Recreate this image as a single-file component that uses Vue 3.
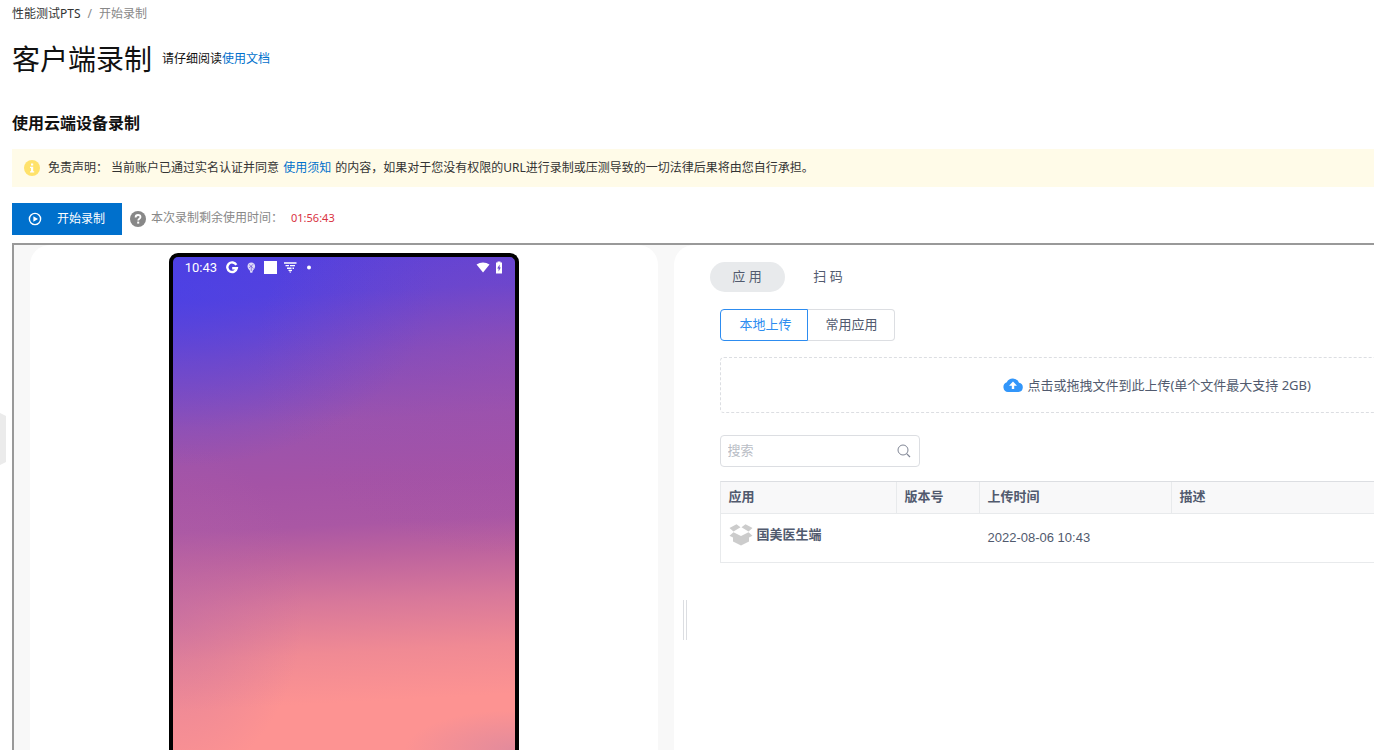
<script setup>
import { ref } from 'vue'

const keyword = ref('')
const columns = [
  { key: 'app', label: '应用' },
  { key: 'version', label: '版本号' },
  { key: 'time', label: '上传时间' },
  { key: 'desc', label: '描述' }
]
const rows = [{ name: '国美医生端', version: '', time: '2022-08-06 10:43', desc: '' }]
</script>

<template>
  <div class="page">
    <button class="side-handle" type="button" aria-label="展开侧栏"></button>

    <nav class="breadcrumb">
      <a href="#">性能测试PTS</a>
      <span class="sep">/</span>
      <span class="current">开始录制</span>
    </nav>

    <header class="heading">
      <h1>客户端录制</h1>
      <p>请仔细阅读<a href="#">使用文档</a></p>
    </header>

    <h2>使用云端设备录制</h2>

    <div class="notice">
      <svg class="info" viewBox="0 0 16 16" aria-hidden="true">
        <circle cx="8" cy="8" r="8" fill="#ffe26b" />
        <path d="M7 3.500h2.200v2H7zM6 6.800h3.200v4.400h1v1.300H6v-1.300h1V8H6z" fill="#fff" />
      </svg>
      <span class="notice-label">免责声明：</span>
      <span>当前账户已通过实名认证并同意 <a href="#">使用须知</a> 的内容，如果对于您没有权限的URL进行录制或压测导致的一切法律后果将由您自行承担。</span>
    </div>

    <div class="toolbar">
      <button class="start" type="button">
        <svg viewBox="0 0 14 14" aria-hidden="true">
          <circle cx="7" cy="7" r="5.6" fill="none" stroke="#fff" stroke-width="1.4" />
          <path d="M5.4 4.2 10 7 5.4 9.8z" fill="#fff" />
        </svg>
        开始录制
      </button>
      <svg class="help" viewBox="0 0 16 16" aria-hidden="true">
        <circle cx="8" cy="8" r="8" fill="#888" />
        <path d="M5.6 6.4C5.6 4.8 6.6 4 8 4s2.5.8 2.5 2.1c0 1.6-2.3 1.7-2.3 3.3" fill="none" stroke="#fff" stroke-width="1.8" />
        <rect x="7.2" y="10.6" width="2" height="2" fill="#fff" />
      </svg>
      <span class="remain">本次录制剩余使用时间：</span>
      <span class="countdown">01:56:43</span>
    </div>

    <main class="frame">
      <div class="workspace">
        <section class="panel device-panel">
          <div class="phone">
            <div class="status">
              <span class="clock">10:43</span>
              <svg class="glyphs" viewBox="0 0 88 14" aria-hidden="true">
                <path d="M11.3 3.9A4.8 4.8 0 1 0 11.8 7.2H7.2" fill="none" stroke="#fff" stroke-width="2.4" />
                <path d="M26.3 1.5c2.3 0 3.8 1.6 3.8 3.8 0 2-1.2 3.2-2.4 4.4l-.4 2h-2l-.4-2c-1.2-1.2-2.4-2.4-2.4-4.400 0-2.200 1.500-3.800 3.800-3.800z" fill="#fff" fill-opacity=".8" />
                <path d="m24 3.500 4.500 4M28.500 3 24 7M26.300 5v5" stroke="#6446d2" stroke-width=".6" />
                <rect x="39" y="0" width="13" height="13" fill="#fff" />
                <path d="M59 2h12.500M60.500 4.600h3.500M65 4.600h5M62 7.200h4.500M67.500 7.200h1.500M63.500 9.400h3.500" stroke="#fff" stroke-width="1.400" />
                <path d="M64 10.600h2.500L65.200 12z" fill="#fff" />
                <circle cx="84" cy="6.500" r="2" fill="#fff" />
              </svg>
              <svg class="signals" viewBox="0 0 28 14" aria-hidden="true">
                <path d="M1.500 3.500C5.500.8 10.500.8 14.500 3.500L8 11.500z" fill="#fff" />
                <path d="M21 1.500h1.500v-1h3v1H27v11h-6z" fill="#fff" />
                <path d="M24.600 3.500 22.200 7.500h1.400v3l2.200-4h-1.200z" fill="#6a48cc" />
              </svg>
            </div>
          </div>
        </section>

        <section class="panel app-panel">
          <div class="splitter"></div>
          <div class="tabs" role="tablist">
            <button type="button" role="tab" aria-selected="true" class="tab active">应 用</button>
            <button type="button" role="tab" aria-selected="false" class="tab">扫 码</button>
          </div>

          <div class="content">
            <div class="segments">
              <button type="button" class="segment active">本地上传</button>
              <button type="button" class="segment">常用应用</button>
            </div>

            <button type="button" class="upload">
              <svg viewBox="0 0 20 14" aria-hidden="true">
                <path d="M5 14A5 5 0 0 1 3.800 4.300 6.700 6.700 0 0 1 16 4.700 4.700 4.700 0 0 1 15.500 14z" fill="#3296fa" />
                <path d="M10 3.500 14 7.800h-2.800V11H8.800V7.800H6z" fill="#fff" />
              </svg>
              <span>点击或拖拽文件到此上传(单个文件最大支持 2GB)</span>
            </button>

            <label class="search">
              <input v-model="keyword" type="text" placeholder="搜索" aria-label="搜索" />
              <svg viewBox="0 0 14 14" aria-hidden="true">
                <circle cx="6" cy="6" r="5" fill="none" stroke="#808695" />
                <path d="m9.600 9.600 3.400 3.400" stroke="#808695" stroke-width="1.200" />
              </svg>
            </label>

            <table>
              <thead>
                <tr>
                  <th v-for="c in columns" :key="c.key" :class="c.key" scope="col">{{ c.label }}</th>
                </tr>
              </thead>
              <tbody>
                <tr v-for="r in rows" :key="r.name">
                  <td>
                    <div class="app-name">
                      <svg viewBox="0 0 24 22" aria-hidden="true">
                        <path d="M.5 4 7.500.3l4 3-7 4.200zM23.500 4 16.500.3l-4 3 7 4.200z" fill="#ccc" />
                        <path d="M.5 11.800 4.500 8.300 12 12l7.500-3.700 4 3.500-3.500 1.800v4L12 21.500 4 17.600v-4z" fill="#ccc" />
                      </svg>
                      <strong>{{ r.name }}</strong>
                    </div>
                  </td>
                  <td>{{ r.version }}</td>
                  <td class="date">{{ r.time }}</td>
                  <td>{{ r.desc }}</td>
                </tr>
              </tbody>
            </table>
          </div>
        </section>
      </div>
    </main>
  </div>
</template>

<style>
body {
  margin: 0;
  background: #fff;
}
</style>

<style scoped>
.page {
  position: relative;
  box-sizing: border-box;
  display: flex;
  flex-direction: column;
  height: 100vh;
  padding-left: 12px;
  overflow: hidden;
  color: #333;
  font: 12px/20px "Noto Sans", "Noto Sans CJK SC", sans-serif;
}
.page * {
  box-sizing: border-box;
}
button,
input {
  margin: 0;
  padding: 0;
  border: 0;
  background: none;
  color: inherit;
  font: inherit;
}
svg {
  display: block;
  flex: none;
}
a {
  color: #0070cc;
  text-decoration: none;
}
.side-handle {
  position: absolute;
  left: 0;
  top: 413px;
  width: 6px;
  height: 52px;
  background: #ebebeb;
  clip-path: polygon(0 0, 100% 3px, 100% 49px, 0 100%);
}
.breadcrumb {
  display: flex;
  gap: 7px;
  padding: 4px 0;
}
.breadcrumb a {
  color: #333;
}
.sep,
.current {
  color: #888;
}
.heading {
  display: flex;
  align-items: center;
  gap: 10px;
  height: 62px;
}
h1 {
  margin: 0;
  color: #111;
  font-size: 28px;
  font-weight: 400;
  line-height: 40px;
}
.heading p {
  margin: 0;
  color: #111;
}
h2 {
  margin: 21px 0 14px;
  color: #111;
  font-size: 16px;
  font-weight: 700;
  line-height: 24px;
}
.notice {
  display: flex;
  align-items: center;
  height: 38px;
  flex: none;
  padding: 0 12px;
  background: #fffbe8;
  white-space: nowrap;
}
.notice a {
  margin: 0 1px;
}
.info,
.help {
  width: 16px;
  height: 16px;
}
.notice-label {
  margin: 0 3px 0 8px;
}
.toolbar {
  display: flex;
  align-items: center;
  flex: none;
  margin: 16px 0 8px;
  color: #888;
}
.start {
  display: flex;
  align-items: center;
  gap: 15px;
  height: 32px;
  margin-right: 8px;
  padding: 0 17px 0 16px;
  background: #0070cc;
  color: #fff;
}
.start svg {
  width: 14px;
  height: 14px;
}
.remain {
  margin: 0 8px 0 5px;
}
.remain,
.countdown {
  padding-bottom: 2px;
}
.countdown {
  color: #d9333f;
  font-size: 11px;
}
.frame {
  flex: 1;
  min-height: 0;
  overflow: hidden;
  border: solid #999;
  border-width: 2px 0 0 2px;
  background: #f8f8f8;
}
.workspace {
  display: grid;
  grid-template-columns: minmax(0, 628fr) minmax(0, 930fr);
  gap: 16px;
  width: 118%;
  height: 100%;
  padding: 0 16px;
}
.panel {
  position: relative;
  border-radius: 20px 20px 0 0;
  background: #fff;
}
.device-panel {
  display: flex;
  justify-content: center;
  padding-top: 8px;
}
.phone {
  width: 350px;
  padding: 4px 12px;
  border: 4px solid #000;
  border-bottom: 0;
  border-radius: 9px 9px 0 0;
  background:
    radial-gradient(ellipse 260px 200px at 100% 100px, rgba(160, 80, 170, 0.4), rgba(160, 80, 170, 0)),
    radial-gradient(ellipse 260px 180px at 0 30px, rgba(68, 64, 234, 0.6), rgba(68, 64, 234, 0)),
    radial-gradient(ellipse 130px 170px at 0 72%, rgba(180, 100, 168, 0.4), rgba(180, 100, 168, 0)),
    radial-gradient(ellipse 110px 40px at 100% 100%, rgba(215, 135, 160, 0.7), rgba(215, 135, 160, 0)),
    linear-gradient(177deg, #5841db 9px, #5c43d8 44px, #7f4cc0 106px, #9a53ae 172px, #a453a6 232px, #aa57a4 276px, #bd639e 308px, #d8789a 354px, #f08a94 404px, #fd9392 454px, #fd9392 515px);
}
.status {
  display: flex;
  align-items: center;
  height: 14px;
  color: #fff;
  font: 400 13px/14px Roboto, sans-serif;
}
.glyphs {
  width: 88px;
  height: 14px;
  margin-left: 8px;
}
.signals {
  width: 28px;
  height: 14px;
  margin-left: auto;
}
.app-panel {
  padding: 17px 8px 0 36px;
  color: #515a6e;
  font-size: 13px;
}
.splitter {
  position: absolute;
  left: 9px;
  top: 355px;
  width: 4px;
  height: 40px;
  border: solid #dcdee2;
  border-width: 0 1px;
}
.tabs {
  display: flex;
  gap: 6px;
}
.tab {
  width: 75px;
  height: 30px;
  padding-bottom: 3px;
  border-radius: 15px;
}
.tab.active {
  background: #e8eaec;
}
.content {
  padding: 17px 0 0 10px;
}
.segments {
  display: flex;
}
.segment {
  width: 87px;
  height: 32px;
  padding: 0 0 3px 2px;
  border: 1px solid #dcdee2;
  border-left: 0;
  border-radius: 0 4px 4px 0;
}
.segment.active {
  width: 88px;
  padding-left: 4px;
  border: 1px solid #2d8cf0;
  border-radius: 4px 0 0 4px;
  color: #2d8cf0;
}
.upload {
  display: flex;
  align-items: center;
  justify-content: center;
  gap: 4px;
  width: 100%;
  height: 56px;
  margin: 16px 0 22px;
  border: 1px dashed #dcdee2;
  border-radius: 4px;
}
.upload svg {
  width: 20px;
  height: 14px;
}
.search {
  display: flex;
  align-items: center;
  width: 200px;
  height: 32px;
  padding: 0 8px 0 7px;
  border: 1px solid #dcdee2;
  border-radius: 4px;
}
.search input {
  flex: 1;
  min-width: 0;
  height: 28px;
  padding-bottom: 2px;
  outline: 0;
}
.search input::placeholder {
  color: #b9bdc5;
  opacity: 1;
}
.search svg {
  width: 14px;
  height: 14px;
}
table {
  width: 100%;
  margin-top: 14px;
  border: 1px solid #e8eaec;
  border-top-color: #dcdee2;
  border-collapse: separate;
  border-spacing: 0;
  table-layout: fixed;
}
th {
  height: 32px;
  padding: 0 8px 4px;
  border-right: 1px solid #e8eaec;
  border-bottom: 1px solid #e8eaec;
  background: #f8f8f9;
  font-weight: 700;
  text-align: left;
}
.app {
  width: 176px;
}
.version {
  width: 83px;
}
.time {
  width: 192px;
}
td {
  height: 48px;
  padding: 0 8px;
}
.date {
  font-family: "Liberation Sans", sans-serif;
}
.app-name {
  display: flex;
  align-items: center;
  gap: 4px;
  padding-bottom: 6px;
}
.app-name strong {
  padding-bottom: 2px;
}
.app-name svg {
  width: 24px;
  height: 22px;
}
</style>
